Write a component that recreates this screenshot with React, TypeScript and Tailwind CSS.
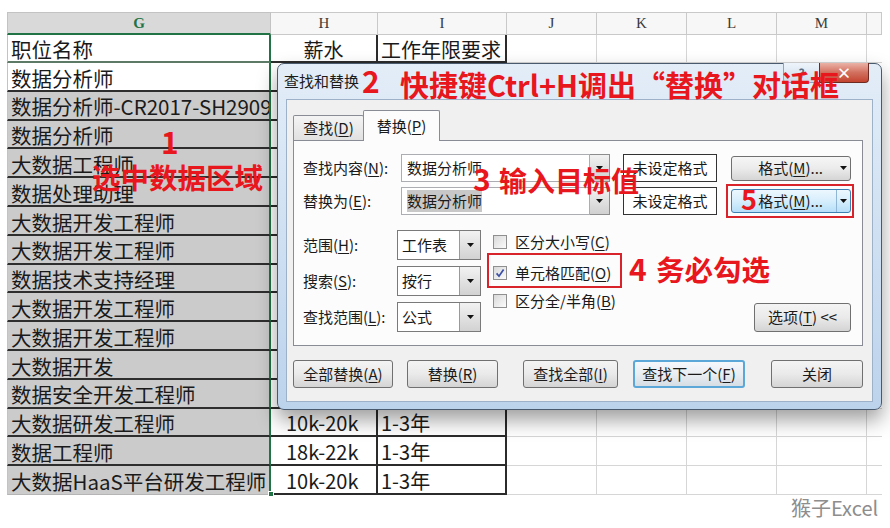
import React from 'react';

const U = ({ c }: { c: string }) => <span className="underline underline-offset-[2px] decoration-[1px]">{c}</span>;

const Tri = () => (
  <svg width="7" height="4" viewBox="0 0 7 4">
    <path d="M0 0h7L3.5 4z" fill="#111" />
  </svg>
);

const Check = ({ on }: { on?: boolean }) => (
  <div className="w-[14px] h-[14px] shrink-0 border border-[#8f8f8f] bg-gradient-to-br from-[#d9d9d9] to-[#fbfbfb] flex items-center justify-center">
    {on && (
      <svg width="10" height="10" viewBox="0 0 10 10">
        <path d="M1.6 5.4 L4 8.2 L8.6 1.4" stroke="#3b4ea6" strokeWidth="1.7" fill="none" />
      </svg>
    )}
  </div>
);

const cols = [
  { l: 'H', w: 'w-[107px]' },
  { l: 'I', w: 'w-[129px]' },
  { l: 'J', w: 'w-[90px]' },
  { l: 'K', w: 'w-[90px]' },
  { l: 'L', w: 'w-[90px]' },
  { l: 'M', w: 'w-[90px]' },
  { l: '', w: 'w-[15px]' },
];

const rows: { g: string; h?: string; i?: string }[] = [
  { g: '职位名称', h: '薪水', i: '工作年限要求' },
  { g: '数据分析师' },
  { g: '数据分析师-CR2017-SH2909' },
  { g: '数据分析师' },
  { g: '大数据工程师' },
  { g: '数据处理助理' },
  { g: '大数据开发工程师' },
  { g: '大数据开发工程师' },
  { g: '数据技术支持经理' },
  { g: '大数据开发工程师' },
  { g: '大数据开发工程师' },
  { g: '大数据开发' },
  { g: '数据安全开发工程师' },
  { g: '大数据研发工程师', h: '10k-20k', i: '1-3年' },
  { g: '数据工程师', h: '18k-22k', i: '1-3年' },
  { g: '大数据HaaS平台研发工程师', h: '10k-20k', i: '1-3年' },
];

const btn =
  'h-[28px] shrink-0 rounded-[3px] border border-[#707070] bg-gradient-to-b from-[#f4f4f4] via-[#eaeaea] to-[#d4d4d4] flex items-center justify-center text-[15px] text-[#1b1b1b]';

function Combo({ text, w }: { text: string; w: string }) {
  return (
    <div className={`${w} h-[30px] shrink-0 border border-[#7a7a7a] bg-white flex`}>
      <div className="flex-1 pl-[4px] flex items-center text-[15px]">{text}</div>
      <div className="w-[21px] border-l border-[#9a9a9a] bg-gradient-to-b from-[#f2f2f2] to-[#d2d2d2] flex items-center justify-center">
        <Tri />
      </div>
    </div>
  );
}

export default function App() {
  return (
    <div className="relative w-[890px] h-[528px] overflow-hidden bg-white font-['Noto_Sans_CJK_SC','Noto_Sans',sans-serif] text-[#1a1a1a]">
      {/* spreadsheet */}
      <div className="pt-[12px] pl-[7px] flex flex-col">
        <div className="flex h-[23px]">
          <div className="w-[264px] shrink-0 border-t border-l border-r border-[#c3c3c3] border-b-2 border-b-[#217346] bg-[#d9d9d9] flex items-center justify-center font-['Liberation_Serif',serif] text-[15px] font-bold text-[#217346]">
            G
          </div>
          {cols.map((c, k) => (
            <div
              key={k}
              className={`${c.w} shrink-0 border-t border-r border-b border-[#c9c9c9] bg-[#f7f7f7] flex items-center justify-center font-['Liberation_Serif',serif] text-[15px] text-[#3a3a3a]`}
            >
              {c.l}
            </div>
          ))}
        </div>
        {rows.map((r, i) => {
          const h = i === 0 ? 'h-[28px]' : 'h-[28.8px]';
          const gBg = i <= 1 ? 'bg-white' : 'bg-[#cbcbcb]';
          const gB =
            i === 0
              ? 'border-b-2 border-b-[#5d7a66]'
              : i === 15
              ? 'border-b border-b-[#b5b5b5]'
              : 'border-b-2 border-b-[#2e2e2e]';
          return (
            <div key={i} className={`flex ${h}`}>
              <div
                className={`w-[264px] shrink-0 border-l border-l-[#c3c3c3] border-r-2 border-r-[#217346] ${gB} ${gBg} pl-[3px] pt-[3px] flex items-center overflow-x-clip whitespace-nowrap text-[20.5px] leading-none`}
              >
                {r.g}
              </div>
              <div
                className={`w-[107px] shrink-0 border-r-2 border-r-[#2b2b2b] border-b-2 border-b-[#2b2b2b] pt-[3px] flex items-center text-[20px] leading-none whitespace-nowrap ${
                  i === 0 ? 'justify-center' : 'pl-[15px]'
                }`}
              >
                {r.h}
              </div>
              <div className="w-[129px] shrink-0 border-r-2 border-r-[#2b2b2b] border-b-2 border-b-[#2b2b2b] pl-[3px] pt-[3px] flex items-center text-[20px] leading-none whitespace-nowrap">
                {r.i}
              </div>
              <div className="w-[90px] shrink-0 border-r border-b border-[#d6d6d6]" />
              <div className="w-[90px] shrink-0 border-r border-b border-[#d6d6d6]" />
              <div className="w-[90px] shrink-0 border-r border-b border-[#d6d6d6]" />
              <div className="w-[90px] shrink-0 border-r border-b border-[#d6d6d6]" />
              <div className="w-[15px] shrink-0 border-b border-[#d6d6d6]" />
            </div>
          );
        })}
      </div>

      {/* selection fill handle */}
      <div className="absolute left-[268px] top-[491px] w-[6px] h-[6px] bg-[#217346] border border-white" />

      {/* dialog */}
      <div className="absolute left-[277px] top-[63px] w-[605px] h-[347px] rounded-[7px] border border-[#4a5a6e] bg-gradient-to-b from-[#e3edf8] via-[#cfe0f2] to-[#bcd3ec] shadow-[0_10px_20px_rgba(0,0,0,0.38)] flex flex-col">
        <div className="relative h-[35px] shrink-0 flex items-center pl-[6px] text-[15px] text-[#1b1b1b]">
          查找和替换
          <div className="absolute right-[12px] top-[-1px] flex">
            <div className="w-[36px] h-[20px] border-l border-b border-[#8ea5c0] rounded-bl-[4px] bg-gradient-to-b from-[#eef4fa] to-[#cddcec] flex items-center justify-center text-[12px] font-bold text-[#5b6b80] leading-none">
              ?
            </div>
            <div className="w-[50px] h-[20px] border border-t-0 border-[#6d2a22] rounded-br-[4px] bg-gradient-to-b from-[#eab2a7] via-[#d2705f] to-[#c2432f] flex items-center justify-center text-[15px] font-bold text-white leading-none">
              ×
            </div>
          </div>
        </div>

        <div className="mx-[8px] h-[303px] shrink-0 bg-[#f0f0f0] border border-[#9db1c8] pl-[6px] flex flex-col">
          {/* tabs */}
          <div className="h-[40px] flex items-end">
            <div className="w-[71px] h-[25px] border border-b-0 border-[#898c95] rounded-t-[2px] bg-gradient-to-b from-[#f4f4f4] to-[#e1e1e1] flex items-center justify-center text-[15px]">
              查找(<U c="D" />)
            </div>
            <div className="relative z-10 -ml-px -mb-px w-[77px] h-[31px] border border-b-0 border-[#898c95] rounded-t-[2px] bg-[#fcfcfc] flex items-center justify-center text-[15px]">
              替换(<U c="P" />)
            </div>
          </div>

          {/* panel */}
          <div className="w-[570px] h-[206px] shrink-0 border border-[#898c95] bg-[#fcfcfc] pl-[9px] pr-[11px] pt-[13px] flex flex-col">
            <div className="flex items-center h-[28px]">
              <div className="w-[98px] shrink-0 text-[15px] whitespace-nowrap">
                查找内容(<U c="N" />):
              </div>
              <div className="w-[209px] h-[28px] shrink-0 flex">
                <div className="flex-1 border border-[#abadb3] bg-white pl-[5px] flex items-center text-[15px]">数据分析师</div>
                <div className="w-[20px] border border-l-0 border-[#8d8d8d] bg-gradient-to-b from-[#f2f2f2] to-[#d0d0d0] flex items-center justify-center">
                  <Tri />
                </div>
              </div>
              <div className="ml-[13px] w-[94px] h-[28px] shrink-0 border border-[#333] bg-white flex items-center justify-center text-[15px]">
                未设定格式
              </div>
              <div className="ml-[14px] w-[120px] h-[25px] shrink-0 rounded-[3px] border border-[#707070] bg-gradient-to-b from-[#f6f6f6] via-[#ebebeb] to-[#d5d5d5] flex items-center">
                <div className="flex-1 h-full flex items-center justify-end pr-[13px] text-[15px]">
                  格式(<U c="M" />)...
                </div>
                <div className="w-[14px] h-full flex items-center justify-center">
                  <Tri />
                </div>
              </div>
            </div>

            <div className="mt-[5px] flex items-center h-[28px]">
              <div className="w-[98px] shrink-0 text-[15px] whitespace-nowrap">
                替换为(<U c="E" />):
              </div>
              <div className="w-[209px] h-[28px] shrink-0 flex">
                <div className="flex-1 border border-[#abadb3] bg-white pl-[5px] flex items-center text-[15px]">
                  <span className="bg-[#c8c8c8]">数据分析师</span>
                </div>
                <div className="w-[20px] border border-l-0 border-[#8d8d8d] bg-gradient-to-b from-[#f2f2f2] to-[#d0d0d0] flex items-center justify-center">
                  <Tri />
                </div>
              </div>
              <div className="ml-[13px] w-[94px] h-[28px] shrink-0 border border-[#333] bg-white flex items-center justify-center text-[15px]">
                未设定格式
              </div>
              <div className="ml-[14px] w-[120px] h-[24px] shrink-0 rounded-[3px] border border-[#3c7fb1] bg-gradient-to-b from-[#edf7fe] via-[#d6eefc] to-[#b6dff9] flex items-center">
                <div className="flex-1 h-full flex items-center justify-end pr-[13px] text-[15px]">
                  格式(<U c="M" />)...
                </div>
                <div className="w-[14px] h-full border-l border-[#8fb6d4] flex items-center justify-center">
                  <Tri />
                </div>
              </div>
            </div>

            <div className="mt-[15px] flex">
              <div className="flex flex-col gap-[6px]">
                <div className="flex items-center h-[30px]">
                  <div className="w-[94px] shrink-0 text-[15px]">
                    范围(<U c="H" />):
                  </div>
                  <Combo text="工作表" w="w-[84px]" />
                </div>
                <div className="flex items-center h-[30px]">
                  <div className="w-[94px] shrink-0 text-[15px]">
                    搜索(<U c="S" />):
                  </div>
                  <Combo text="按行" w="w-[84px]" />
                </div>
                <div className="flex items-center h-[30px]">
                  <div className="w-[94px] shrink-0 text-[15px] whitespace-nowrap">
                    查找范围(<U c="L" />):
                  </div>
                  <Combo text="公式" w="w-[84px]" />
                </div>
              </div>

              <div className="ml-[12px] flex flex-col">
                <div className="h-[24px] flex items-center gap-[8px] text-[15px]">
                  <Check />
                  <span>
                    区分大小写(<U c="C" />)
                  </span>
                </div>
                <div className="mt-[7px] h-[24px] flex items-center gap-[8px] text-[15px]">
                  <Check on />
                  <span>
                    单元格匹配(<U c="O" />)
                  </span>
                </div>
                <div className="mt-[4px] h-[24px] flex items-center gap-[8px] text-[15px]">
                  <Check />
                  <span>
                    区分全/半角(<U c="B" />)
                  </span>
                </div>
              </div>

              <div className={`ml-auto self-end w-[97px] !h-[29px] ${btn}`}>
                选项(<U c="T" />)&nbsp;&lt;&lt;
              </div>
            </div>
          </div>

          {/* bottom buttons */}
          <div className="mt-[14px] flex">
            <div className={`w-[100px] ${btn}`}>
              全部替换(<U c="A" />)
            </div>
            <div className={`ml-[14px] w-[91px] ${btn}`}>
              替换(<U c="R" />)
            </div>
            <div className={`ml-[25px] w-[95px] ${btn}`}>
              查找全部(<U c="I" />)
            </div>
            <div className="ml-[15px] w-[112px] h-[28px] shrink-0 rounded-[3px] border-2 border-[#5aa7d8] bg-gradient-to-b from-[#f5f8fb] via-[#e9eef3] to-[#d6dde4] flex items-center justify-center text-[15px]">
              查找下一个(<U c="F" />)
            </div>
            <div className={`ml-[26px] w-[92px] ${btn}`}>关闭</div>
          </div>
        </div>
      </div>

      {/* red annotation boxes */}
      <div className="absolute left-[726px] top-[184px] w-[128px] h-[34px] border-2 border-[#d8232a]" />
      <div className="absolute left-[487px] top-[253px] w-[135px] h-[35px] border-2 border-[#d8232a]" />

      {/* red annotation texts */}
      <div className="absolute left-[362px] top-[65px] text-[30px] font-bold leading-none text-[#e8161d]">2</div>
      <div className="absolute left-[400px] top-[70px] text-[29px] font-bold leading-none text-[#e8161d] whitespace-nowrap">
        快捷键Ctrl+H调出“替换”对话框
      </div>

      <div className="absolute left-[161px] top-[126px] text-[30px] font-bold leading-none text-[#e8161d]">1</div>
      <div className="absolute left-[92px] top-[163px] text-[28.5px] font-bold leading-none text-[#e8161d] whitespace-nowrap">
        选中数据区域
      </div>

      <div className="absolute left-[473px] top-[163px] text-[30px] font-bold leading-none text-[#e8161d]">3</div>
      <div className="absolute left-[499px] top-[166px] text-[28px] font-bold leading-none text-[#e8161d] whitespace-nowrap">
        输入目标值
      </div>

      <div className="absolute left-[629px] top-[253px] text-[30px] font-bold leading-none text-[#e8161d]">4</div>
      <div className="absolute left-[656px] top-[255px] text-[28.5px] font-bold leading-none text-[#e8161d] whitespace-nowrap">
        务必勾选
      </div>

      <div className="absolute left-[741px] top-[185px] text-[27px] font-bold leading-none text-[#e8161d]">5</div>

      {/* watermark */}
      <div className="absolute left-[791px] top-[498px] text-[20px] leading-none text-[#8d8d8d] whitespace-nowrap">
        猴子Excel
      </div>
    </div>
  );
}
